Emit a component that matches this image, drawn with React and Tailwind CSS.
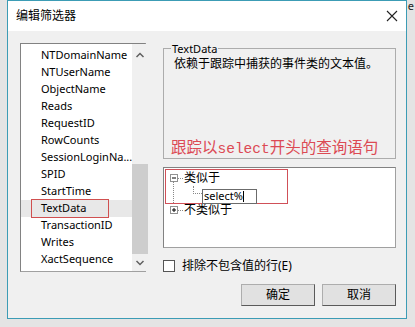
import React from 'react';

const fields = [
  'NTDomainName',
  'NTUserName',
  'ObjectName',
  'Reads',
  'RequestID',
  'RowCounts',
  'SessionLoginNa...',
  'SPID',
  'StartTime',
  'TextData',
  'TransactionID',
  'Writes',
  'XactSequence',
];

const font = 'font-["Noto_Sans","Noto_Sans_CJK_SC",sans-serif]';

const TreeBox = ({ sign }) => (
  <span className="w-[8px] h-[8px] border border-[#919191] bg-white flex items-center justify-center shrink-0">
    <svg width="6" height="6" viewBox="0 0 6 6">
      <path d="M1 3h4" stroke="#000" strokeWidth="1" />
      {sign === '+' && <path d="M3 1v4" stroke="#000" strokeWidth="1" />}
    </svg>
  </span>
);

const App = () => {
  return (
    <div className={`w-[415px] h-[327px] bg-[#e4e4e4] relative overflow-hidden ${font}`}>
      <span className="absolute right-[1px] top-[0px] text-[11px] leading-[12px] text-[#222]">e</span>
      <div className="ml-[7px] w-[400px] h-[319px] border border-[#3c9cb5] bg-[#f0f0f0] flex flex-col">
        {/* title bar */}
        <div className="h-[30px] bg-white flex items-center justify-between pl-[8px] pr-[7px] shrink-0">
          <span className="text-[12px] text-black">编辑筛选器</span>
          <svg width="14" height="14" viewBox="0 0 14 14">
            <path d="M2 2l10 10M12 2L2 12" stroke="#222" strokeWidth="1.1" />
          </svg>
        </div>

        <div className="flex pl-[12px] pt-[12px]">
          {/* field list */}
          <div className="w-[126px] h-[229px] bg-white border border-[#a0a0a0] border-t-[#828282] border-l-[#828282] flex shrink-0">
            <div className="flex-1 pt-[3px]">
              {fields.map((f) => (
                <div
                  key={f}
                  className={`h-[17px] flex items-center pl-[20px] text-[11px] text-black ${
                    f === 'TextData' ? 'bg-[#e8e8e8]' : ''
                  }`}
                >
                  {f === 'TextData' ? (
                    <span className="border border-[#d05050] h-[19px] w-[78px] -ml-[10px] pl-[9px] flex items-center">
                      {f}
                    </span>
                  ) : (
                    f
                  )}
                </div>
              ))}
            </div>
            <div className="w-[16px] bg-[#f0f0f0] flex flex-col items-center">
              <svg width="16" height="22" viewBox="0 0 16 22" className="shrink-0">
                <path d="M4.5 13l3.5-3.5 3.5 3.5" fill="none" stroke="#606060" strokeWidth="1.5" />
              </svg>
              <div className="h-[99px]" />
              <div className="w-[16px] h-[90px] bg-[#cdcdcd]" />
              <svg width="16" height="16" viewBox="0 0 16 16" className="shrink-0 mt-[1px]">
                <path d="M4.5 6l3.5 3.5 3.5-3.5" fill="none" stroke="#606060" strokeWidth="1.5" />
              </svg>
            </div>
          </div>

          {/* right side */}
          <div className="ml-[17px] w-[233px] flex flex-col">
            <fieldset className="border border-[#acacac] h-[117px] px-[10px] -mt-[1px]">
              <legend className="ml-[-3px] px-[1px] text-[11px] leading-[13px] text-black">TextData</legend>
              <div className="h-[104px] flex flex-col justify-between">
                <p className="text-[12px] leading-[16px] text-black mt-[1px]">依赖于跟踪中捕获的事件类的文本值。</p>
                <p className="-ml-[3px] text-[15.5px] leading-[20px] text-[#dc4a54] whitespace-nowrap">
                  跟踪以<span className="font-['Liberation_Mono',monospace] text-[14.5px]">select</span>开头的查询语句
                </p>
              </div>
            </fieldset>

            <div className="mt-[8px] h-[81px] bg-white border border-[#a0a0a0] border-t-[#828282] border-l-[#828282] relative pl-[6px] pt-[2px]">
              <div className="absolute left-[1px] top-[1px] w-[123px] h-[35px] border border-[#d05058]" />
              <div className="h-[16px] flex items-center">
                <TreeBox sign="-" />
                <span className="w-[5px] border-t border-dotted border-[#888]" />
                <span className="text-[12px] leading-[16px] text-black ml-[1px]">类似于</span>
              </div>
              <div className="h-[16px] flex items-center relative">
                <span className="absolute left-[3px] top-[-5px] h-[22px] border-l border-dotted border-[#888]" />
                <span className="ml-[23px] h-[8px] self-start border-l border-b border-dotted border-[#888] w-[9px]" />
                <span className="w-[55px] h-[15px] border border-[#6b6b6b] bg-white flex items-center pl-[1px] text-[11px] text-black mt-[4px]">
                  select%<span className="w-px h-[11px] bg-black" />
                </span>
              </div>
              <div className="h-[16px] flex items-center">
                <TreeBox sign="+" />
                <span className="w-[5px] border-t border-dotted border-[#888]" />
                <span className="text-[12px] leading-[16px] text-black ml-[1px]">不类似于</span>
              </div>
            </div>

            <label className="flex items-center mt-[11px] h-[14px]">
              <span className="w-[12px] h-[12px] border border-[#555] bg-white" />
              <span className="ml-[7px] text-[12px] text-black">排除不包含值的行(E)</span>
            </label>

            <div className="flex justify-end gap-[7px] mt-[11px]">
              <button className="w-[74px] h-[22px] bg-[#e1e1e1] border border-[#adadad] border-b-[#5a5a5a] border-r-[#5a5a5a] text-[12px] text-black">
                确定
              </button>
              <button className="w-[74px] h-[22px] bg-[#e1e1e1] border border-[#adadad] border-b-[#5a5a5a] border-r-[#5a5a5a] text-[12px] text-black">
                取消
              </button>
            </div>
          </div>
        </div>
      </div>
    </div>
  );
};

export default App;
